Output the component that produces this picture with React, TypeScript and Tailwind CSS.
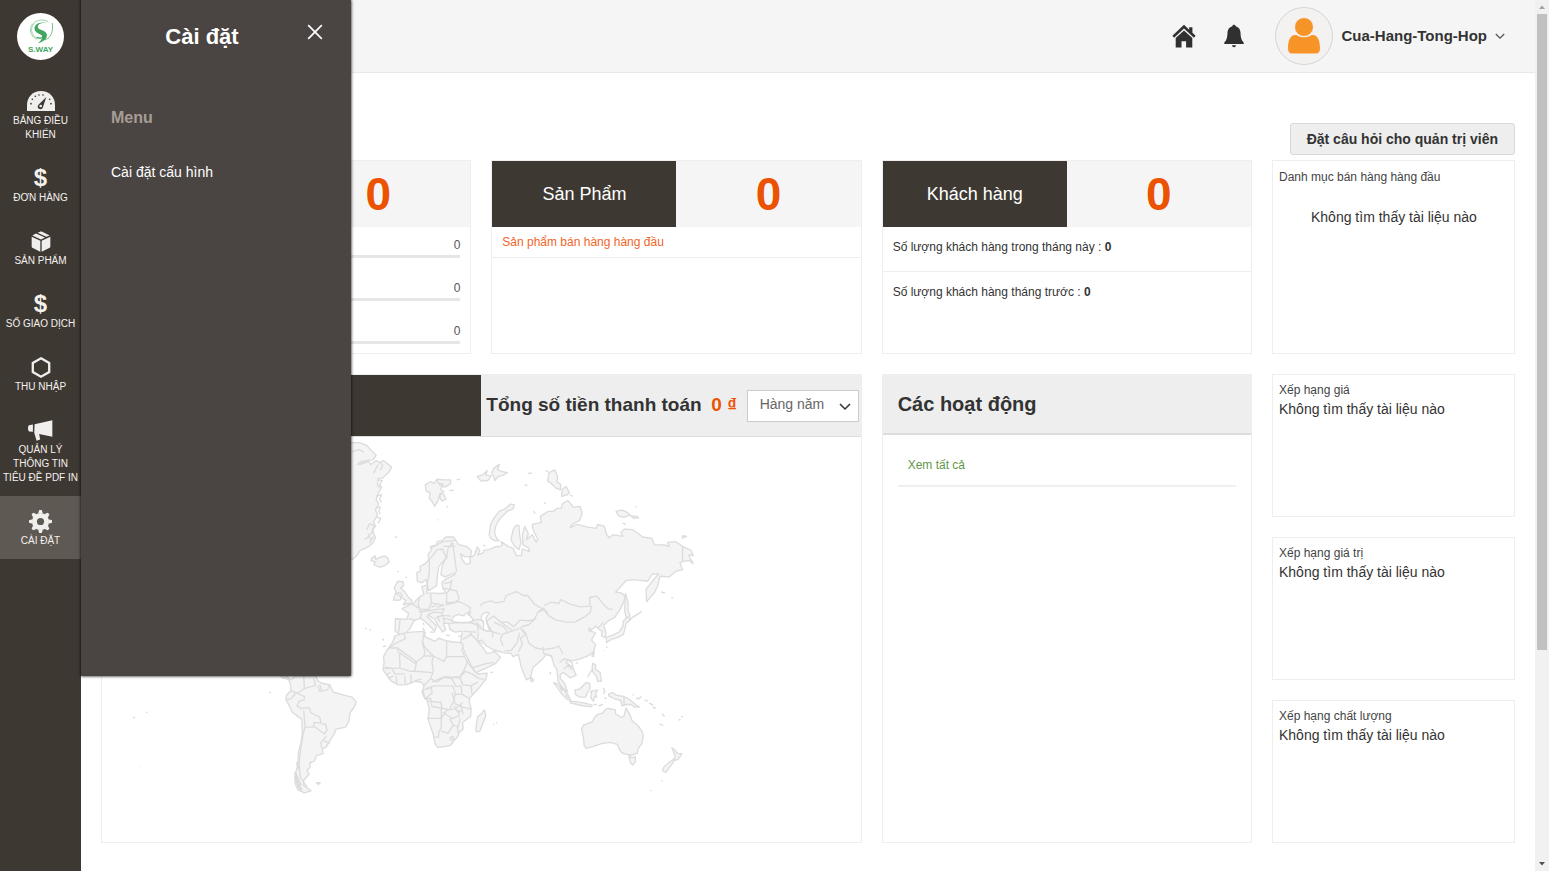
import React, { useState } from "react";
import clsx from "clsx";

interface NavItemType {
  id: string;
  label: string;
  icon: React.ReactNode;
}

interface RatingType {
  id: string;
  title: string;
}

const navItems: NavItemType[] = [
  { id: "dashboard", label: "Bảng điều khiển", icon: <GaugeIcon /> },
  { id: "orders", label: "Đơn hàng", icon: <DollarIcon /> },
  { id: "products", label: "Sản phẩm", icon: <BoxIcon /> },
  { id: "transactions", label: "Số giao dịch", icon: <DollarIcon /> },
  { id: "income", label: "Thu nhập", icon: <HexagonIcon /> },
  { id: "pdf", label: "Quản lý thông tin tiêu đề PDF in", icon: <MegaphoneIcon /> },
  { id: "settings", label: "Cài đặt", icon: <GearIcon /> },
];

const ratings: RatingType[] = [
  { id: "price", title: "Xếp hạng giá" },
  { id: "value", title: "Xếp hạng giá trị" },
  { id: "quality", title: "Xếp hạng chất lượng" },
];

const orderStats = [0, 0, 0];

export default function App() {
  const [active, setActive] = useState("settings");
  const [panelOpen, setPanelOpen] = useState(true);

  return (
    <div className="relative flex h-screen overflow-hidden bg-white font-['Liberation_Sans',Arial,sans-serif] text-[#333]">
      <Sidebar
        active={active}
        onSelect={(id) => {
          setActive(id);
          setPanelOpen(id === "settings");
        }}
      />

      <div className="flex min-w-0 flex-1 flex-col">
        <Header />
        <main className="px-5 pt-[50px]">
          <div className="mb-[5px] flex justify-end">
            <button
              type="button"
              className="h-8 rounded-[3px] border border-[#d8d8d8] bg-[#eee] px-4 text-sm font-bold text-[#333]"
            >
              Đặt câu hỏi cho quản trị viên
            </button>
          </div>
          <Dashboard />
        </main>
      </div>

      <ScrollBar />

      {panelOpen && <SettingsPanel onClose={() => setPanelOpen(false)} />}
    </div>
  );
}

function Sidebar({
  active,
  onSelect,
}: {
  active: string;
  onSelect: (id: string) => void;
}) {
  return (
    <nav className="flex w-[81px] shrink-0 flex-col bg-[#3e3833]">
      <a
        href="#"
        className="mx-auto mt-[13px] mb-4 flex h-[47px] w-[47px] flex-col items-center rounded-full bg-white pt-1.5"
      >
        <LogoMark />
        <span className="text-[8px] leading-[8px] font-bold text-[#43a862]">S.WAY</span>
      </a>
      {navItems.map((item) => (
        <button
          key={item.id}
          type="button"
          onClick={() => onSelect(item.id)}
          className={clsx(
            "flex w-full flex-col items-center pt-3 pb-[11px] text-[#f4f1ee]",
            active === item.id && "bg-[#5f5953]"
          )}
        >
          <span className="flex h-[26px] items-center">{item.icon}</span>
          <span className="px-[3px] text-[10px] leading-[14px] uppercase">{item.label}</span>
        </button>
      ))}
    </nav>
  );
}

/** Flyout that covers the left part of the dashboard */
function SettingsPanel({ onClose }: { onClose: () => void }) {
  return (
    <aside className="absolute top-0 left-[81px] h-[676px] w-[270px] bg-[#4a4542] px-[30px] shadow-[0_0_3px_#000]">
      <div className="flex h-[72px] items-center justify-center pr-7">
        <h2 className="text-[22px] font-bold text-white">Cài đặt</h2>
        <button
          type="button"
          aria-label="Đóng"
          onClick={onClose}
          className="absolute top-6 right-7 text-white"
        >
          <svg viewBox="0 0 16 16" className="h-4 w-4" stroke="currentColor" strokeWidth="1.700">
            <path d="M1.200 1.200l13.600 13.600M14.800 1.200L1.200 14.800" />
          </svg>
        </button>
      </div>
      <h3 className="mt-[34px] text-base leading-6 font-bold text-[#a79d95]">Menu</h3>
      <a href="#" className="mt-8 block text-sm leading-5 text-white">
        Cài đặt cấu hình
      </a>
    </aside>
  );
}

function Header() {
  return (
    <header className="flex h-[73px] shrink-0 items-center justify-end border-b border-[#e8e8e8] bg-[#f5f5f5] pr-[30px]">
      <a href="#" aria-label="Trang chủ" className="mr-7 text-[#303030]">
        <svg viewBox="0 0 24 24" className="h-6 w-6" fill="currentColor">
          <path d="M12 .8L.4 11.800l1.700 2L12 4.500l9.900 9.300 1.700-2-3.200-3V3.200h-3.200v2.500z" />
          <path d="M12 6.400L3.700 14v9.600h5.800v-6.400h4.600v6.400h6.200V14z" />
        </svg>
      </a>
      <button type="button" aria-label="Thông báo" className="mr-[31px] text-[#303030]">
        <svg viewBox="0 0 20 24" className="h-6 w-5" fill="currentColor">
          <path d="M10 .8c-.9 0-1.600.6-1.700 1.400C5.200 3 3.600 5.500 3.500 8.500c-.1 5-.9 8-3.200 9.900V20h19.400v-1.600c-2.300-1.900-3.100-4.900-3.200-9.900-.1-3-1.700-5.500-4.800-6.300C11.600 1.400 10.900.8 10 .8z" />
          <path d="M8 21.200h4c0 1.200-.9 2-2 2s-2-.8-2-2z" />
        </svg>
      </button>
      <button type="button" className="flex items-center">
        <svg viewBox="0 0 58 58" className="mr-2 h-[58px] w-[58px]">
          <circle cx="29" cy="29" r="28.500" fill="#f4f2f1" stroke="#d4d4d4" />
          <path
            d="M20.500 28c1.700 0 3.500 2.300 8.500 2.300s6.800-2.300 8.500-2.300c5.500 0 7.500 6 7.500 13.500 0 3.500-1.500 5-4 5H17c-2.500 0-4-1.500-4-5C13 34 15 28 20.500 28z"
            fill="#f79428"
          />
          <circle cx="29" cy="20" r="9.500" fill="#f79428" stroke="#f4f2f1" />
        </svg>
        <span className="text-[15px] font-bold text-[#333]">Cua-Hang-Tong-Hop</span>
        <svg
          viewBox="0 0 10 10"
          className="ml-2 h-2.5 w-2.5"
          fill="none"
          stroke="#555"
          strokeWidth="1.300"
        >
          <path d="M.8 3L5 7.200 9.200 3" />
        </svg>
      </button>
    </header>
  );
}

function Dashboard() {
  return (
    <div className="grid grid-cols-[1fr_1fr_1fr_243px] gap-5">
      {/* Orders */}
      <section className="min-h-[194px] border border-[#eee]">
        <CardHeader value={0} />
        <div className="flex flex-col gap-[22px] px-2.5 pt-2.5">
          {orderStats.map((stat, i) => (
            <div key={i} className="border-b-[3px] border-[#e6e6e6] pb-0.5 text-right text-xs leading-4 text-[#555]">
              {stat}
            </div>
          ))}
        </div>
      </section>

      {/* Products */}
      <section className="border border-[#eee]">
        <CardHeader label="Sản Phẩm" value={0} />
        <p className="border-b border-[#eee] px-2.5 text-xs leading-[30px] text-[#f1652a]">
          Sản phẩm bán hàng hàng đầu
        </p>
      </section>

      {/* Customers */}
      <section className="border border-[#eee]">
        <CardHeader label="Khách hàng" value={0} />
        <p className="border-b border-[#eee] px-2.5 pt-3 pb-4 text-xs leading-4">
          Số lượng khách hàng trong tháng này : <b>0</b>
        </p>
        <p className="px-2.5 pt-3 text-xs leading-4">
          Số lượng khách hàng tháng trước : <b>0</b>
        </p>
      </section>

      <section className="border border-[#eee] px-1.5 pt-2">
        <h3 className="text-xs leading-4 text-[#444]">Danh mục bán hàng hàng đầu</h3>
        <p className="mt-[22px] pl-8 text-sm leading-5">Không tìm thấy tài liệu nào</p>
      </section>

      {/* Sales map */}
      <section className="col-span-2 border border-[#eee]">
        <div className="flex h-[62px] border-b border-[#ddd] bg-[#eee]">
          <div className="w-1/2 bg-[#3e3833]" />
          <div className="flex w-1/2 items-center pr-0.5 pl-[5px]">
            <h2 className="text-[19px] font-bold whitespace-nowrap">Tổng số tiền thanh toán</h2>
            <span className="mx-auto text-[19px] font-bold whitespace-nowrap text-[#eb5202]">
              0 ₫
            </span>
            <div className="relative w-28 shrink-0">
              <select
                aria-label="Khoảng thời gian"
                className="h-8 w-full appearance-none border border-[#ccc] bg-white pl-3 pb-1 text-sm text-[#666]"
              >
                <option>Hàng năm</option>
              </select>
              <svg
                viewBox="0 0 12 8"
                className="pointer-events-none absolute top-[13px] right-2 h-2 w-3"
                fill="none"
                stroke="#333"
                strokeWidth="1.500"
              >
                <path d="M1 1l5 5 5-5" />
              </svg>
            </div>
          </div>
        </div>
        <WorldMap />
      </section>

      <section className="border border-[#eee]">
        <div className="flex h-[60px] items-center border-b-2 border-[#ddd] bg-[#eee] px-[15px]">
          <h2 className="text-xl font-bold">Các hoạt động</h2>
        </div>
        <div className="mx-[15px] border-b-2 border-[#f0f0f0] px-2.5 pt-[22px] pb-3">
          <a href="#" className="block text-xs leading-4 text-[#5f9747]">
            Xem tất cả
          </a>
        </div>
      </section>

      <div className="flex flex-col gap-5">
        {ratings.map((rating) => (
          <section key={rating.id} className="min-h-[143px] border border-[#eee] px-1.5 pt-1.5">
            <h3 className="text-xs leading-[18px] text-[#444]">{rating.title}</h3>
            <p className="text-sm leading-5">Không tìm thấy tài liệu nào</p>
          </section>
        ))}
      </div>
    </div>
  );
}

function CardHeader({ label, value }: { label?: string; value: number }) {
  return (
    <div className="flex h-[66px] bg-[#f5f5f5] text-center">
      <div className="w-1/2 bg-[#3e3833]">
        {label && <h2 className="text-lg leading-[66px] text-white">{label}</h2>}
      </div>
      <span className="w-1/2 text-[46px] leading-[66px] font-bold text-[#eb5202]">{value}</span>
    </div>
  );
}

function ScrollBar() {
  return (
    <div className="flex w-3.5 shrink-0 flex-col items-center bg-[#f1f1f1]">
      <svg viewBox="0 0 14 14" className="h-3.5 w-3.5 shrink-0" fill="#a3a3a3">
        <path d="M4 9l3-3.500L10 9z" />
      </svg>
      <div className="h-[73%] w-2.5 bg-[#c1c1c1]" />
      <svg viewBox="0 0 14 14" className="mt-auto h-3.5 w-3.5 shrink-0" fill="#505050">
        <path d="M4 5l3 3.500L10 5z" />
      </svg>
    </div>
  );
}

function LogoMark() {
  return (
    <svg viewBox="0 0 72 76" className="mb-0.5 h-[25px] w-6" fill="none">
      <path d="M58 8C40-2 14 4 6 22c-7 18 4 34 18 40M14 14C2 30 8 48 20 56" stroke="#9ad1aa" strokeWidth="3" />
      <path d="M70 12c4 24-2 44-22 52" stroke="#6dbd84" strokeWidth="3" />
      <path
        d="M66 10c-14 2-30 0-38 8-5 6 0 12 8 15 10 4 18 8 18 17 0 12-14 20-28 24 6-5 14-11 14-19 0-8-10-9-18-15-10-8-6-22 6-27 11-5 26-1 38-3z"
        fill="#3fa55f"
      />
      <path d="M22 56c8 4 20 2 28-6" stroke="#3fa55f" strokeWidth="4" />
    </svg>
  );
}

function GaugeIcon() {
  return (
    <svg viewBox="0 0 84 60" className="h-5 w-7">
      <path d="M0 60V42C0 18 18 0 42 0s42 18 42 42v18z" fill="#f0efee" />
      <g fill="#3e3833">
        <circle cx="12" cy="38" r="2.500" />
        <circle cx="16" cy="25" r="2.500" />
        <circle cx="25" cy="16" r="2.500" />
        <circle cx="36" cy="12" r="2.500" />
        <circle cx="48" cy="12" r="2.500" />
        <circle cx="68" cy="25" r="2.500" />
        <circle cx="72" cy="38" r="2.500" />
        <path d="M58 18L36 40a8 8 0 1 0 12 8z" />
      </g>
      <circle cx="41" cy="45" r="4" fill="#f0efee" />
    </svg>
  );
}

function DollarIcon() {
  return <span className="text-2xl leading-6 font-bold">$</span>;
}

function BoxIcon() {
  return (
    <svg viewBox="0 0 60 62" className="h-[21px] w-5" fill="#f0efee">
      <path d="M2 17l26 12v33L4 50c-1-.5-2-2-2-3zM58 17L32 29v33l24-12c1-.5 2-2 2-3z" />
      <path d="M4 13l11-6 27 12-12 6zM20 5l9-4c1-.5 2-.5 3 0l24 12-10 4z" />
    </svg>
  );
}

function HexagonIcon() {
  return (
    <svg viewBox="0 0 60 64" className="h-[21px] w-5" fill="none" stroke="#f0efee" strokeWidth="7">
      <path d="M30 4l25 14v28L30 60 5 46V18z" />
    </svg>
  );
}

function MegaphoneIcon() {
  return (
    <svg viewBox="0 0 76 62" className="h-[21px] w-[25px]" fill="#f0efee">
      <path d="M20 12L74 0v50L34 42l3 16-11 4-7-24zM3 15l12-2v22l-12-1c-4-4-4-15 0-19z" />
    </svg>
  );
}

function GearIcon() {
  return (
    <svg viewBox="0 0 70 70" className="h-[23px] w-[23px]">
      <g fill="#f0efee">
        <circle cx="35" cy="35" r="26" />
        <path d="M28 11l3-11h8l3 11zM28 59l3 11h8l3-11zM11 28L0 31v8l11 3zM59 28l11 3v8l-11 3z" />
        <path d="M13 24L8 13l5-5 11 5zM46 13l11-5 5 5-5 11zM13 46L8 57l5 5 11-5zM57 46l5 11-5 5-11-5z" />
      </g>
      <circle cx="35" cy="35" r="11" fill="#5f5953" />
    </svg>
  );
}

// Country shapes are grouped by region, every group has its own origin
function WorldMap() {
  return (
    <svg
      viewBox="0 0 2283 1218"
      className="w-full"
      fill="#f4f4f4"
      stroke="#dcdcdc"
      strokeWidth="4"
      strokeLinejoin="round"
    >
      {/* Greenland, Europe and Asia */}
      <g transform="translate(717 -21)">
        <path d="M0 38L30 38 58 38 80 46 88 56 108 76 98 90 76 92 58 104 85 94 92 104 108 92 118 98 130 92 155 112 145 128 128 144 114 146 112 166 122 176 114 190 108 210 116 222 106 240 112 256 100 276 106 290 96 300 106 324 98 340 80 354 60 362 48 380 35 390 0 390z" />
        <path
          d="M35 65l22 -6 14 8M50 105l18 -14M100 130l14 -26M118 95l10 12 -8 14M112 150l14 2 -8 12 8 10M108 200l16 -6 -6 14 6 10M106 235l14 -4 -4 14 4 8M110 262l12 4 -8 14M80 300l8 -18 14 6 -4 18 -14 12M74 330l12 -10 8 12M88 340l12 -20"
          fill="none"
        />
        <path d="M95 385l10 -6 2 10 12 -6 14 -4 10 6 4 12 -12 10 -16 6 -18 -8 4 -8 -12 -4z" />
        <path d="M256 165l16 -10 10 6 8 -12 6 12 14 2 -8 16 10 6 -14 12 -4 16 -10 16 -8 -14 -8 -10 2 -16 -12 -6zM290 148l20 2 22 0 0 12 -18 10 -14 -6zM300 190l12 4 6 14 -12 6 -6 -10z" />
        <path d="M412 140l18 -6 12 -12 -4 14 16 2 -10 14 -20 2zM455 130l8 -16 16 -10 -6 16 18 6 12 2 -12 8 -16 4 -10 12 -4 -14zM628 128l18 -8 8 20 -2 16 12 8 -2 16 -14 -6 -14 -14 -10 -6zM668 178l12 -8 10 20 -10 6 -14 4zM830 245l18 -4 14 6 10 8 -18 8 -16 -4zM872 258l20 2 6 4 -14 2zM850 280l10 4M1030 318l12 2 -12 5z" />
        <path
          d="M350 150l10 -2M328 182l14 -1M320 232l4 -2M292 270l3 1M165 324l6 -3M172 425l4 2M195 442l5 2M566 130l10 0M555 165l8 2M613 221l6 -2M618 123l8 1M582 244l4 8M888 230l4 2M692 196l8 4M404 365l10 2M430 347l6 2M965 487l12 4M996 504l6 1M905 547l3 -3M74 597l5 1M88 601l5 1M128 630l4 1"
          fill="none"
        />
        <path d="M448 315l4 -30 12 -22 14 -18 18 -8 16 -14 12 2 -4 12 -18 8 -14 14 -12 14 -8 16 -4 18 6 18 8 8 -14 0 -12 -8z" />

        {/* mainland */}
        <path d="M230 430L242 424 240 410 256 402 266 390 264 375 275 360 272 350 290 346 292 336 308 332 318 322 340 322 348 332 356 345 380 350 395 364 392 380 375 382 362 372 368 392 380 405 392 400 390 385 405 375 412 352 420 362 414 376 430 370 432 362 448 360 470 350 478 352 488 346 484 336 505 350 520 356 530 378 545 378 548 358 570 366 565 354 550 345 548 315 555 290 566 312 560 330 578 315 590 338 594 328 580 300 578 284 605 278 602 260 625 245 640 245 652 236 665 235 668 222 685 212 702 232 722 230 728 252 720 272 700 282 692 294 712 284 745 292 770 296 775 284 795 290 802 316 810 324 820 315 850 320 845 308 855 298 880 300 898 312 910 322 938 326 945 345 975 346 990 350 985 338 1010 336 1030 350 1055 362 1062 378 1048 376 1062 402 1048 392 1022 398 1030 420 1010 425 990 442 962 440 955 470 945 490 922 516 920 480 935 460 958 432 938 434 925 455 885 450 860 453 838 478 828 488 845 490 858 500 852 520 842 540 825 565 810 572 792 588 800 610 798 624 786 620 788 605 776 598 770 590 755 602 748 596 748 604 768 610 756 632 768 645 762 668 745 680 718 690 700 694 684 690 680 700 700 715 710 738 692 746 672 730 662 735 662 748 675 762 684 788 668 775 655 755 652 720 645 712 635 680 620 675 608 690 580 715 572 745 560 752 545 715 536 675 520 682 514 672 490 670 462 662 440 650 425 632 412 636 430 655 440 672 458 670 462 664 482 684 468 702 440 716 408 730 398 715 380 680 362 640 365 620 368 605 345 608 330 600 326 582 310 582 318 600 308 608 296 590 285 572 268 558 262 562 290 590 284 606 272 592 250 572 240 566 222 574 208 600 196 612 180 615 165 605 166 568 200 570 206 552 186 538 200 530 220 522 238 502 252 495 245 472 262 466 260 490 300 492 318 490 308 474 306 458 318 448 344 436 346 430 314 442 303 436 306 412 316 388 296 412 292 440 290 468 266 484 258 450 245 460 232 455z" />
        <path d="M172 495l-10 -20 12 -20 16 2 0 12 -8 6 14 14 10 16 10 8 -2 8 -24 4 8 -12 -12 -8zM160 512l6 -22 14 0 6 8 -6 14z" />
        <path d="M248 595l5 8 -3 6M250 580l2 8M270 608l14 0M318 618l12 0M355 622l12 -4" fill="none" />
        <path d="M520 300l10 -14 8 2 2 30 4 20 -6 22 -14 -10 -10 -20z" />

        {/* inland seas */}
        <path
          d="M335 575l6 -14 14 -6 16 4 8 -8 14 -3 -6 8 14 14 -8 10 -22 0 -18 -2zM426 556l14 -8 8 2 -10 16 4 18 10 14 -8 8 -14 -6 2 -18 -8 -14z"
          fill="#fff"
        />

        {/* borders */}
        <path
          d="M420 530l10 -10 24 -6 14 6 24 -4 8 -18 30 -12 20 12 14 0 20 26 28 16 -18 10 -10 20 -16 4 -26 -2 -20 20 -18 -14 -22 0 -20 -18 -20 14 4 22 14 12 -2 16M614 528l20 -10 24 4 6 -12 28 14 30 8 30 -2 -2 -26 22 -4 18 22 16 16 14 2M612 540l14 18 24 14 30 6 26 0 26 -14 20 -14 4 -20M594 548l18 -12 14 18M545 592l22 -6 22 -20M548 600l10 12 10 30 20 14 26 4 30 -4 14 -6 12 24M610 652l2 20 26 10M536 668l12 -24 -6 -18 16 -10 -18 -22M490 650l-8 -20 6 -16 26 -8 24 -8M494 664l20 0 18 -24 8 -30M414 590l16 12 24 4 28 8M415 610l-2 20M372 606l38 2M390 610l20 22 18 12M368 630l28 -16M400 715l38 -12 24 -4M462 578l30 14 14 20M468 566l20 16 28 20M660 700l14 -12 24 12 2 20M672 720l14 -12 10 14M776 596l16 -18"
          fill="none"
        />
        <path
          d="M262 466l6 -40 0 -36 24 -30 16 -2 12 30M320 388l4 -30 14 -20M338 338l6 44 6 44M310 350l36 0M270 356l40 -20 36 -4M312 462l20 -4M308 476l24 4M336 450l-6 30 -10 12 0 34M332 480l18 4 8 24 -12 10 -30 2M318 526l40 -10 34 18 -8 24M272 492l2 28 40 8M274 520l-8 20 -28 0M240 500l-6 24 8 22M215 522l20 14M246 546l-6 22M236 548l26 -4 28 -4 24 -2M262 556l20 -8 24 2 8 -12M286 566l20 -8 28 2M306 550l4 16 24 6M290 534l20 -6M310 568l6 14M292 560l8 18M206 568l20 4M180 570l-4 38M274 534l14 -8M328 582l60 -4 24 8 4 20M388 578l26 -8 20 6M410 578l14 16M1030 350l0 46"
          fill="none"
        />
        <path d="M858 492l8 26 0 24 6 18 -12 6 -4 -24zM852 575l12 -12 10 8 -14 10 -4 20 -4 14 -18 10 -16 4 -16 10 -2 -14 20 -8 20 -10 10 -16z" />
        <path d="M870 570l35 -22M800 655l4 -3M792 664l2 0M760 672l4 -4 -2 14 -5 -2zM708 702l8 -2" fill="none" />
      </g>

      {/* Africa */}
      <g transform="translate(807 249)">
        <path d="M98 342L124 338 160 336 166 340 164 352 196 366 206 356 228 364 250 368 274 370 280 378 276 392 292 428 316 458 324 464 352 462 348 480 326 508 300 536 298 546 304 570 302 592 278 610 280 630 268 640 264 652 240 680 204 686 196 676 188 640 174 600 178 570 172 545 160 530 156 516 162 502 156 490 136 486 110 496 84 497 62 484 46 462 38 450 42 430 40 412 52 390 68 368 74 350z" />
        <path
          d="M102 344l4 14 -30 14 -22 18M62 386l22 0 0 14M80 384l60 44M88 400l46 32M88 400l2 46 -46 2M42 444l24 4 8 16 30 0M88 446l34 10 14 0M140 426l-6 30M162 338l-4 30 6 16 26 26M156 366l8 30 -2 14 -28 22M190 410l-26 0M230 364l0 48 54 0M230 412l-8 14 -32 -16 -4 20 4 26 -8 22 18 10 26 -16 42 4 14 -22 14 -34M136 456l50 4M182 478l-22 24M154 480l-20 4M104 470l2 26M122 466l2 28M78 470l2 22M60 460l-10 6M54 478l16 -8M186 488l34 -14 26 4 12 24 16 -2M250 474l22 -2 14 -16 20 8 22 14 14 2M270 474l8 22 26 4 20 -12M168 508l26 -8 54 0 8 20 -4 24 -14 28 -18 -4 -34 -6 -4 -24 -18 0 -4 -22M184 500l2 22 -20 16M174 546l40 4 2 22M214 550l0 48 -42 0M214 598l18 -26 24 -2 22 -20M218 580l30 18 20 -8 -2 -18M246 520l10 34 24 10 22 6M256 526l20 -2 22 14M274 500l2 24M304 500l2 24M214 598l0 28 -8 14 0 14 -14 0M214 636l20 6 16 -24 -10 -18 10 -4M250 618l16 4 4 -24M262 622l4 26M240 656l8 -4 4 8 -8 4zM272 556l8 30M252 560l12 20 10 -4M160 512l24 -6"
          fill="none"
        />
        <path d="M318 632l2 -20 4 -20 12 -10 8 -10 4 18 -10 26 -8 20 -10 2z" />
        <path d="M370 615l3 2M379 610l3 1M362 460l7 -1M541 458l3 8M36 360l6 2M38 382l10 -2" fill="none" />
        <path d="M484 474l8 8 -4 6 -6 -4z" />
      </g>

      {/* South-East Asia and Oceania */}
      <g transform="translate(1317 549)">
        <path d="M42 190l12 4 16 16 16 18 8 16 -12 -4 -14 -14 -14 -20zM92 246l20 2 24 4 22 6 -2 5 -30 -4 -34 -8zM106 212l14 -2 20 -20 10 2 2 14 -8 14 -6 14 -18 0 -12 -8zM152 218l10 -4 14 -2M156 214l-2 22 8 10 4 -14 6 2 -4 -12 6 -6M160 132l8 4 0 14 14 10 4 26 -12 0 -2 -14 -12 -14 -2 -14z" />
        <path d="M208 224l12 -4 10 8 24 4 18 10 16 14 12 8 -14 0 -12 -8 -14 0 -12 4 -4 -16 -20 -6 -16 -8zM254 232l0 26" />
        <path
          d="M162 256l10 0M176 260l14 -4M192 206l4 10 -4 8M194 235l8 4M158 150l-14 24M290 238l10 0 6 -6M280 226l4 2M316 242l10 4M330 252l12 6M340 264l10 4M368 284l8 8M360 314l12 6M418 302l6 0M426 294l6 -2M366 486l4 0M333 515l4 0M32 160l1 4M60 202l8 14M78 226l8 10"
          fill="none"
        />
        <path d="M126 330L132 318 158 308 166 294 178 284 190 282 196 272 206 268 228 272 228 284 248 296 254 290 260 266 272 288 278 304 296 320 308 336 312 350 308 372 296 390 294 402 278 408 262 406 248 402 238 388 234 376 212 370 186 374 162 382 140 388 134 380 132 356z" />
        <path d="M268 410l10 6 10 -2 0 14 -8 10 -6 -6z" />
        <path d="M398 386l10 8 8 10 12 0 -12 18 -10 2 2 -14zM404 420l-2 10 -12 16 -10 14 -10 -4 4 -12 16 -14z" />
      </g>

      {/* South America */}
      <g transform="translate(477 699)">
        <path d="M50 10L68 26 84 30 90 44 92 64 78 78 76 92 84 104 96 130 124 150 126 190 122 220 114 250 112 290 104 316 104 344 112 362 132 372 152 366 130 350 130 334 146 316 140 304 150 294 148 282 162 276 168 260 188 254 186 238 196 236 206 220 222 194 228 180 256 174 266 156 270 130 282 114 288 98 276 84 250 78 218 68 208 46 184 42 172 34 166 20 130 18 104 20 92 32 80 22 66 14z" />
        <path
          d="M92 64l18 8 22 -14 -2 -38M78 92l14 -4 14 -16M110 72l22 10 0 10 -16 4 -6 14 16 10M126 116l22 0 2 14 28 14 4 18 -20 -2 -4 14 -24 0M130 124l4 50 -6 22 -8 50 -4 40 4 40 20 28M132 58l34 -10 -6 -20M172 50l6 16 24 -4 6 -16M184 66l-6 -20M162 172l30 22 8 -10 -4 -18 -12 -2M198 202l-16 18 2 16M186 212l22 12"
          fill="none"
        />
        <path d="M110 280l4 20M104 322l6 22 14 20M108 340l14 26M104 310l8 20 10 20" strokeWidth="7" fill="none" />
        <path
          d="M26 68l4 4M168 341l12 0 -6 6zM150 282l4 -4M-345 129l5 1M-384 146l6 -3M-363 290l0 2"
          fill="none"
        />
      </g>
    </svg>
  );
}
